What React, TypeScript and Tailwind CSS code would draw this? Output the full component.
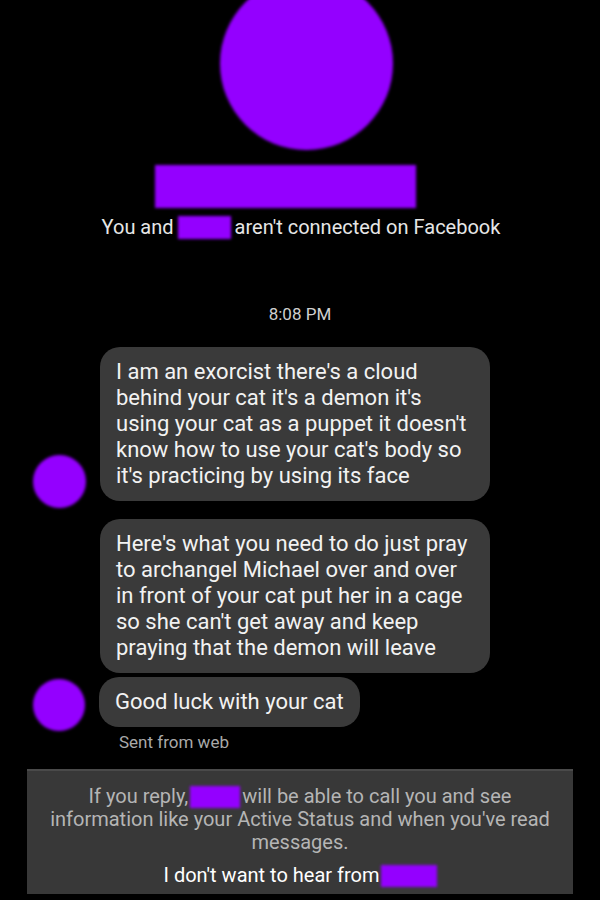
const PURPLE = 'bg-[#9400ff]';

function Blob({ className }: { className: string }) {
  return <div className={`${PURPLE} blur-[1.5px] ${className}`} />;
}

function Bubble({ children, className = '' }: { children: React.ReactNode; className?: string }) {
  return (
    <div
      className={`whitespace-nowrap rounded-[20px] bg-[#3a3a3a] px-[16px] py-[12px] text-[22px] leading-[26px] text-[#f2f2f2] ${className}`}
    >
      {children}
    </div>
  );
}

export default function App() {
  return (
    <div className="h-[900px] w-[600px] overflow-hidden bg-black font-['Roboto','Liberation_Sans',sans-serif]">
      <Blob className="-mt-[23px] ml-[220px] h-[173px] w-[173px] rounded-full" />
      <Blob className="ml-[155px] mt-[15px] h-[43px] w-[261px]" />

      <div className="mt-[7px] flex items-center justify-center pl-[2px] text-[20px] leading-[24px] text-[#e6e6e6]">
        <span>You and</span>
        <Blob className="mx-[4px] h-[23px] w-[53px]" />
        <span>aren't connected on Facebook</span>
      </div>

      <p className="mt-[65px] text-center text-[17px] leading-[20px] text-[#cfcfcf]">8:08 PM</p>

      <div className="mt-[23px] flex flex-col gap-[18px] pl-[33px]">
        <div className="flex items-end gap-[14px]">
          <Blob className="mb-[-7px] h-[53px] w-[53px] shrink-0 rounded-full" />
          <Bubble className="w-[390px]">
            I am an exorcist there's a cloud
            <br />
            behind your cat it's a demon it's
            <br />
            using your cat as a puppet it doesn't
            <br />
            know how to use your cat's body so
            <br />
            it's practicing by using its face
          </Bubble>
        </div>

        <div className="flex flex-col gap-[4px]">
          <div className="pl-[67px]">
            <Bubble className="w-[390px]">
              Here's what you need to do just pray
              <br />
              to archangel Michael over and over
              <br />
              in front of your cat put her in a cage
              <br />
              so she can't get away and keep
              <br />
              praying that the demon will leave
            </Bubble>
          </div>
          <div className="flex items-end gap-[14px]">
            <Blob className="mb-[-4px] h-[52px] w-[52px] shrink-0 rounded-full" />
            <Bubble className="py-[11px]">Good luck with your cat</Bubble>
          </div>
        </div>
      </div>

      <p className="ml-[119px] mt-[5px] text-[17px] leading-[20px] text-[#a9a9a9]">Sent from web</p>

      <div className="mx-[27px] mt-[17px] border-t-2 border-[#4a4a4a] bg-[#383838] px-[6px] pb-[7px] pt-[14px] text-center">
        <p className="whitespace-nowrap text-[20px] leading-[23px] text-[#b5b5b5]">
          If you reply,
          <span className="mx-[2px] inline-block h-[22px] w-[50px] translate-y-[1px] align-top bg-[#9400ff] blur-[1.5px]" />
          will be able to call you and see
          <br />
          information like your Active Status and when you've read
          <br />
          messages.
        </p>
        <p className="mt-[9px] whitespace-nowrap text-[20px] leading-[24px] text-white">
          I don't want to hear from
          <span className="ml-[1px] inline-block h-[22px] w-[56px] translate-y-[2px] align-top bg-[#9400ff] blur-[1.5px]" />
        </p>
      </div>
    </div>
  );
}
